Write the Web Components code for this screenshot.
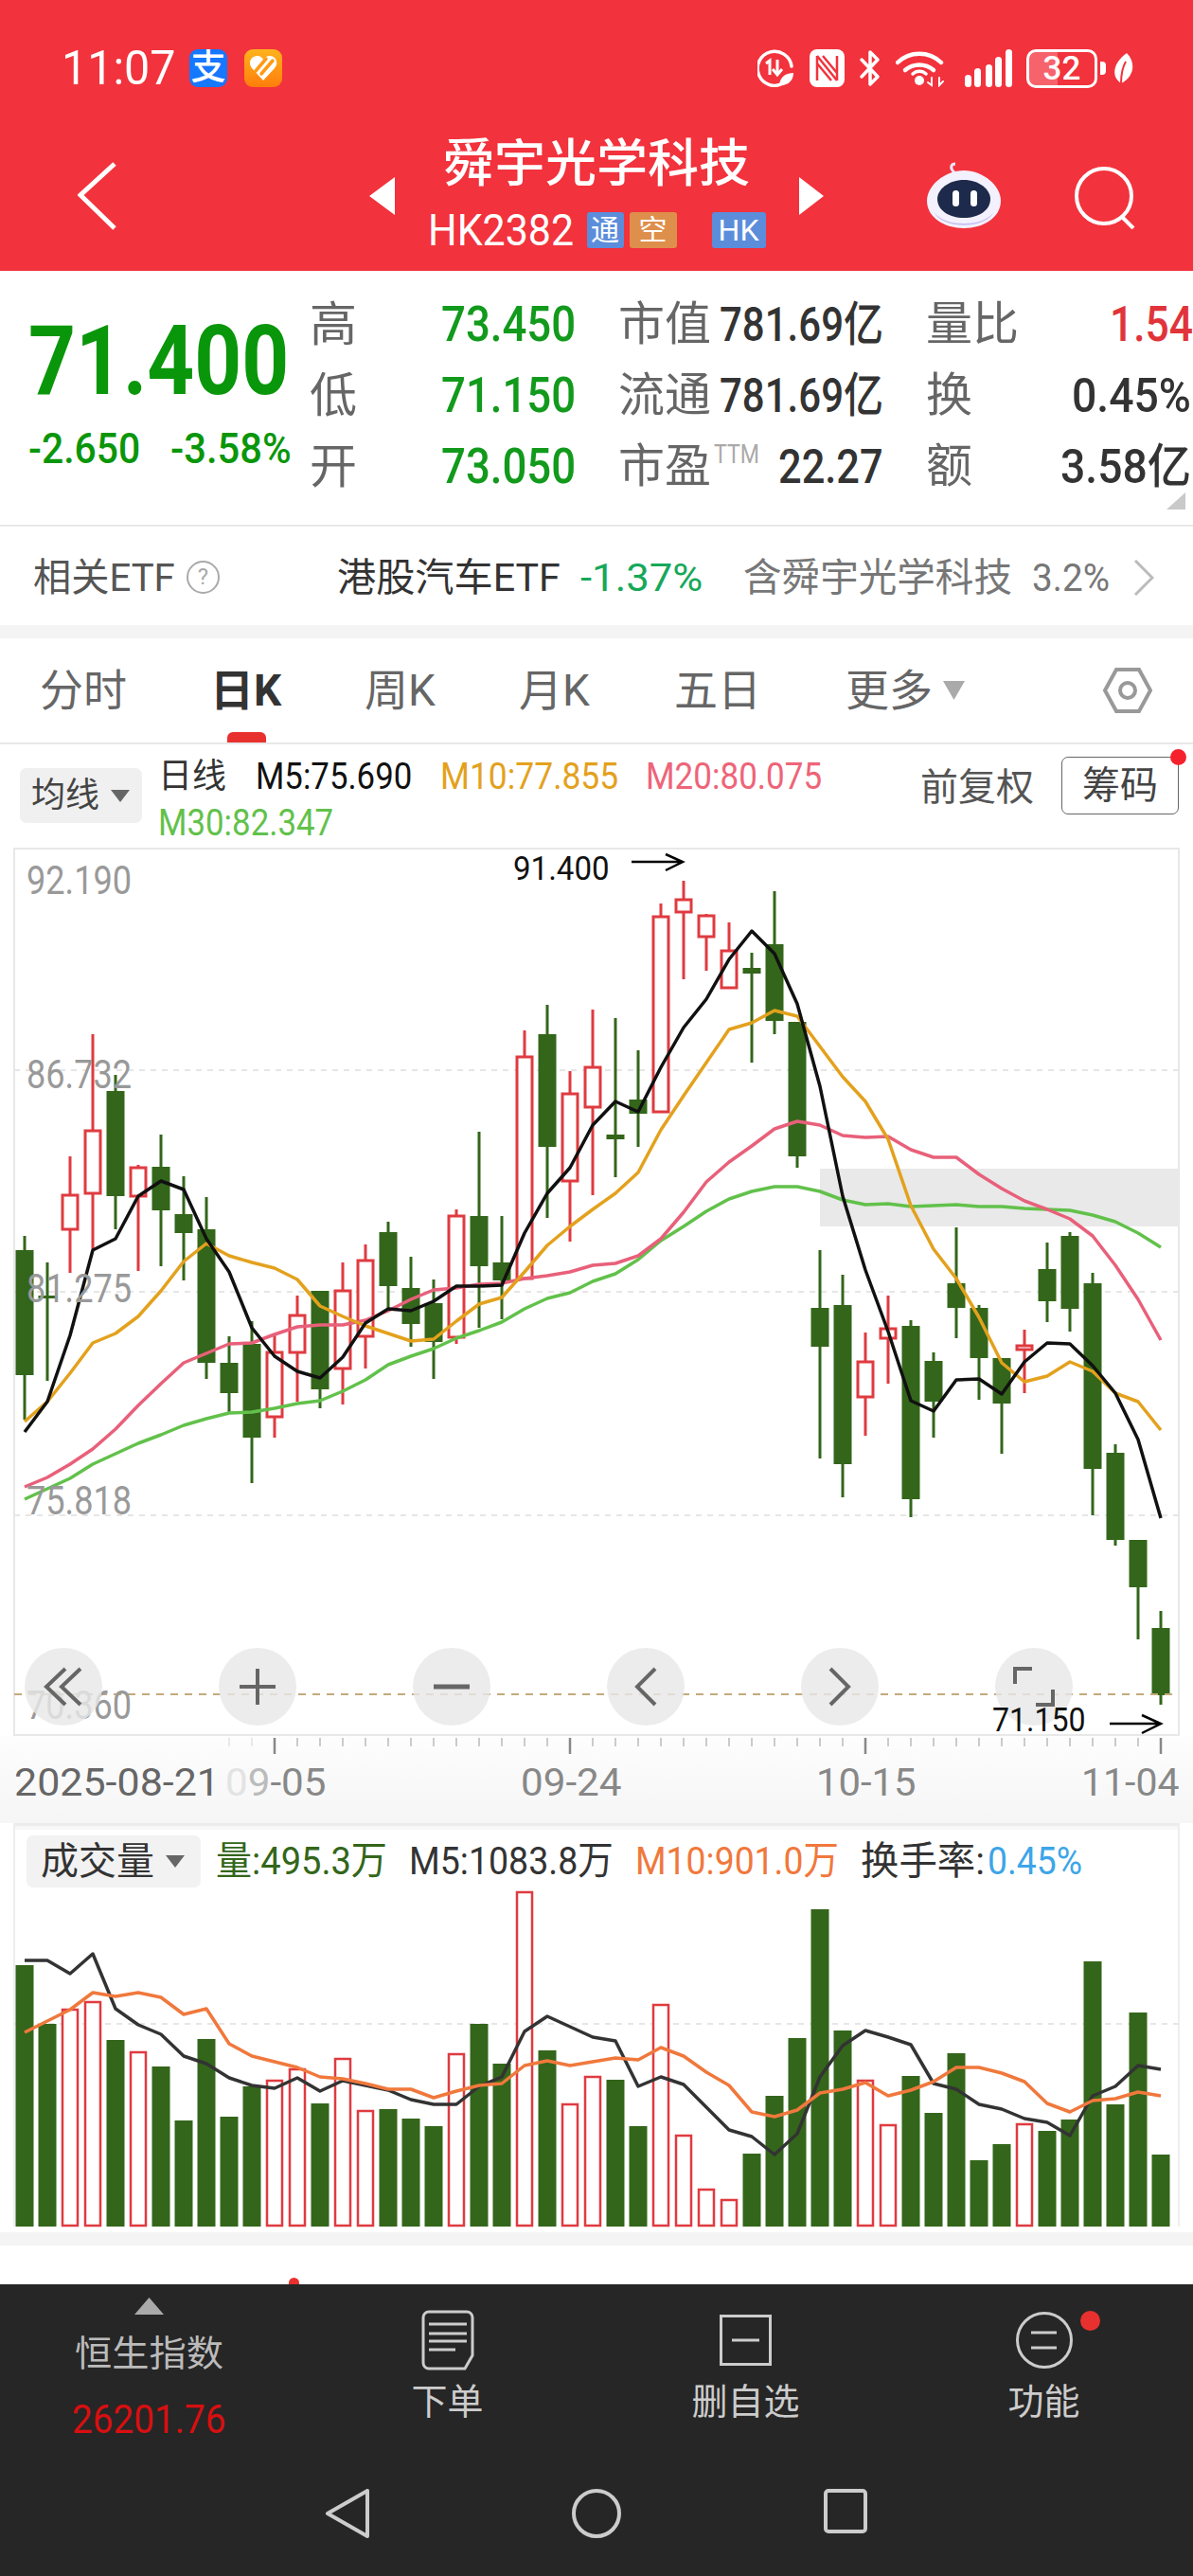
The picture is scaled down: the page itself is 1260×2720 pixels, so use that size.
<!DOCTYPE html>
<html lang="zh">
<head>
<meta charset="utf-8">
<title>舜宇光学科技</title>
<style>
  html, body { margin: 0; padding: 0; background: #fff; }
  body { width: 1260px; height: 2720px; overflow: hidden; font-family: Roboto, "Noto Sans CJK SC", sans-serif; }
</style>
</head>
<body>
<stock-header></stock-header>
<quote-panel></quote-panel>
<etf-row></etf-row>
<period-tabs></period-tabs>
<kline-legend></kline-legend>
<kline-chart></kline-chart>
<date-axis></date-axis>
<volume-panel></volume-panel>
<bottom-bar></bottom-bar>

<script>
const GREEN = '#33661a'
const RED = '#df3b40'
const xAt = (i) => 26 + 24 * i

// squeezes its text to a given width, the app uses a narrow DIN style face
class FitText extends HTMLElement {
  connectedCallback() {
    if (this.shadowRoot) return
    const w = +this.getAttribute('w')
    const root = this.attachShadow({mode: 'open'})
    root.innerHTML = `
      <style>
        :host { display: inline-block; width: ${w}px; white-space: nowrap; vertical-align: top; }
        span { display: inline-block; transform-origin: 0 50%; }
      </style>
      <span><slot></slot></span>
    `
    const inner = root.querySelector('span')
    inner.style.transform = `scaleX(${w / inner.offsetWidth})`
  }
}
customElements.define('fit-text', FitText)

class StockHeader extends HTMLElement {
  connectedCallback() {
    this.attachShadow({mode: 'open'}).innerHTML = `
      <style>
        :host { display: block; height: 286px; background: #f2323c; color: #fff; box-sizing: border-box; padding-top: 51px; }
        .status { display: flex; align-items: center; height: 42px; padding-left: 65px; }
        .time { font-size: 50px; line-height: 42px; width: 135px; }
        .app { width: 40px; height: 40px; border-radius: 9px; display: flex; align-items: center; justify-content: center; }
        .alipay { background: #1677ff; font-size: 37px; line-height: 40px; font-weight: 500; }
        .heart { background: linear-gradient(#ffb31c, #ff7d0c); margin-left: 18px; }
        .sys { display: flex; align-items: center; margin-left: auto; margin-right: 63px; }
        .sys svg { display: block; }
        .battery { width: 75px; height: 41px; box-sizing: border-box; border: 3px solid #fff; border-radius: 10px; margin-left: 15px; position: relative; font-size: 35px; font-weight: 500; line-height: 35px; text-align: center; background: linear-gradient(90deg, #f7636b 44%, transparent 44%); }
        .nav { display: grid; grid-template-columns: 390px 480px 1fr; height: 120px; margin-top: 54px; }
        .back { margin: 24px 0 0 82px; display: block; }
        .center { display: grid; grid-template-columns: 28px 1fr 28px; align-items: start; }
        .center svg { margin-top: 40px; display: block; }
        .mid { text-align: center; }
        .title { font-size: 54px; line-height: 58px; font-weight: 500; height: 58px; margin-top: -2px; }
        .sub { display: flex; justify-content: center; align-items: center; height: 38px; margin-top: 21px; }
        .code { font-size: 46px; line-height: 38px; width: 154px; text-align: left; }
        .tag { height: 38px; border-radius: 3px; font-size: 30px; line-height: 38px; text-align: center; color: #fff; }
        .t1 { width: 39px; background: #5b8ddb; margin-left: 14px; }
        .t2 { width: 50px; background: #de8f4b; margin-left: 6px; }
        .t3 { width: 57px; background: #5b8ddb; margin-left: 37px; font-size: 32px; }
        .tools { display: flex; align-items: flex-start; padding-left: 108px; padding-top: 23px; }
        .tools svg { display: block; }
      </style>
      <div class="status">
        <div class="time"><fit-text w="121">11:07</fit-text></div>
        <div class="app alipay">支</div>
        <div class="app heart">
          <svg width="30" height="28" viewBox="0 0 30 28"><path d="M15 27 L3 14 C-2 7 3 1 9 1 C12 1 14 3 15 5 C16 3 19 1 22 1 C28 1 32 8 27 14 Z" fill="#fff"/><path d="M18 4 L7 17 M25 6 L13 20" stroke="#ff9a14" stroke-width="3.5" fill="none" stroke-linecap="round"/></svg>
        </div>
        <div class="sys">
          <svg width="38" height="40" viewBox="0 0 38 40" fill="none" stroke="#fff"><path d="M27 36 A18 18 0 1 1 36 18" stroke-width="3.5" stroke-linecap="round"/><path d="M9 15 L13 12 V27" stroke-width="3"/><path d="M21 11 V26 M16 21 L21 27 L26 21" stroke-width="3"/><path d="M23 38 C24 28 31 25 38 25 C38 33 32 39 23 38 Z" fill="#fff" stroke="none"/></svg>
          <svg style="margin-left:17px" width="37" height="40" viewBox="0 0 37 40"><rect width="37" height="40" rx="8" fill="#fff"/><path d="M8 7 V33 M29 7 V33 M8 7 L29 33 M14 7 L29 25 M8 15 L23 33" stroke="#f2323c" stroke-width="2.5" fill="none"/></svg>
          <svg style="margin-left:15px" width="24" height="40" viewBox="0 0 24 40" fill="none" stroke="#fff" stroke-width="3.5" stroke-linecap="round" stroke-linejoin="round"><path d="M3 11 L20 29 L12 37 V3 L20 11 L3 29"/></svg>
          <svg style="margin-left:15px" width="52" height="40" viewBox="0 0 52 40" fill="none" stroke="#fff" stroke-linecap="round"><path d="M2 14 A33 33 0 0 1 48 14" stroke-width="4.5"/><path d="M10 22 A23 23 0 0 1 40 22" stroke-width="4.5"/><circle cx="25" cy="33" r="5" fill="#fff" stroke="none"/><path d="M18 26 A10 10 0 0 1 32 26" stroke-width="3.5"/><path d="M38 30 V38 L34 35 M46 30 V38 L50 34" stroke-width="2"/></svg>
          <svg style="margin-left:21px" width="50" height="40" viewBox="0 0 50 40" fill="#fff"><rect x="0" y="27" width="7" height="13" rx="3.5"/><rect x="10" y="20" width="7" height="20" rx="3.5"/><rect x="22" y="16" width="7" height="24" rx="3.5"/><rect x="32" y="8" width="7" height="32" rx="3.5"/><rect x="43" y="0" width="7" height="40" rx="3.5"/></svg>
          <div class="battery">32</div>
          <svg style="margin-left:3px" width="6" height="14" viewBox="0 0 6 14"><path d="M0 0 H2 a4 4 0 0 1 4 4 V10 a4 4 0 0 1 -4 4 H0 Z" fill="#fff"/></svg>
          <svg style="margin-left:7px" width="22" height="32" viewBox="0 0 22 32"><path d="M15 0 C25 10 23 25 9 32 C-3 24 2 9 15 0 Z" fill="#fff"/><path d="M14 9 C10 16 9 24 9 32" stroke="#f2323c" stroke-width="2" fill="none"/></svg>
        </div>
      </div>
      <div class="nav">
        <svg class="back" width="42" height="72" viewBox="0 0 42 72" fill="none" stroke="#fff" stroke-width="5"><path d="M39 2 L3 35 L39 70"/></svg>
        <div class="center">
          <svg width="28" height="40" viewBox="0 0 28 40"><path d="M27 0 V40 L0 20 Z" fill="#fff"/></svg>
          <div class="mid">
            <div class="title">舜宇光学科技</div>
            <div class="sub">
              <fit-text class="code" w="154">HK2382</fit-text>
              <span class="tag t1">通</span><span class="tag t2">空</span><span class="tag t3">HK</span>
            </div>
          </div>
          <svg style="margin-left:2px" width="26" height="40" viewBox="0 0 26 40"><path d="M0 0 V40 L26 20 Z" fill="#fff"/></svg>
        </div>
        <div class="tools">
          <svg width="80" height="72" viewBox="0 0 80 72">
            <path d="M30 12 C25 8 26 3 31 3" stroke="#e8e4f8" stroke-width="3" fill="none"/>
            <path d="M40 10 C60 10 79 26 79 42 C79 60 60 71 40 71 C20 71 1 60 1 42 C1 26 20 10 40 10 Z" fill="#f3f1fd"/>
            <path d="M40 66 C28 66 16 63 9 55 C18 72 62 72 71 55 C64 63 52 66 40 66 Z" fill="#c7bff0"/>
            <path d="M40 20 C56 20 68 30 68 40 C68 52 56 60 40 60 C24 60 12 52 12 40 C12 30 24 20 40 20 Z" fill="#1d2a4b"/>
            <rect x="28" y="31" width="7" height="17" rx="3.5" fill="#fff"/><rect x="47" y="31" width="7" height="17" rx="3.5" fill="#fff"/>
          </svg>
          <svg style="margin:6px 0 0 77px" width="64" height="66" viewBox="0 0 64 66" fill="none" stroke="#fff" stroke-width="4"><circle cx="31" cy="31" r="29"/><path d="M50 53 L62 65"/></svg>
        </div>
      </div>
    `
  }
}
customElements.define('stock-header', StockHeader)

class QuotePanel extends HTMLElement {
  connectedCallback() {
    this.attachShadow({mode: 'open'}).innerHTML = `
      <style>
        :host { display: block; position: relative; height: 270px; overflow: hidden; box-sizing: border-box; border-bottom: 2px solid #e8e8e8; background: #fff; }
        .wrap { display: grid; grid-template-columns: 327px 1fr; }
        .left { padding: 59px 0 0 30px; color: #0a960a; }
        .price { font-size: 102px; line-height: 72px; font-weight: 700; height: 72px; }
        .chg { display: flex; gap: 32px; margin-top: 41px; font-size: 44px; line-height: 32px; font-weight: 500; }
        .grid { display: grid; grid-template-columns: 139px 187px 325px 282px; grid-auto-rows: 75px; padding-top: 19px; align-items: center; }
        .k { color: #666; font-size: 49px; line-height: 60px; }
        .big { font-size: 50px; }
        .g { color: #129a1c; font-size: 51px; line-height: 60px; font-weight: 500; }
        .pair { display: flex; justify-content: space-between; align-items: center; width: 280px; }
        .pair.end { width: 280px; }
        .v { color: #333; font-size: 50px; line-height: 60px; font-weight: 500; }
        .r { color: #e0343a; font-size: 51px; line-height: 60px; font-weight: 500; margin-right: -2px; }
        .ttm { color: #aaa; font-size: 27px; line-height: 24px; margin: -26px 0 0 3px; }
        .lab { display: flex; align-items: center; }
        .corner { position: absolute; right: 8px; bottom: 16px; width: 20px; height: 18px; background: #c9c9c9; clip-path: polygon(100% 0, 100% 100%, 0 100%); }
      </style>
      <div class="wrap">
        <div class="left">
          <div class="price"><fit-text w="275">71.400</fit-text></div>
          <div class="chg"><fit-text w="118">-2.650</fit-text><fit-text w="128">-3.58%</fit-text></div>
        </div>
        <div class="grid">
          <span class="k big">高</span><span class="g"><fit-text w="142">73.450</fit-text></span>
          <div class="pair"><span class="k">市值</span><span class="v"><fit-text w="173">781.69亿</fit-text></span></div>
          <div class="pair end"><span class="k">量比</span><span class="r"><fit-text w="88">1.54</fit-text></span></div>

          <span class="k big">低</span><span class="g"><fit-text w="142">71.150</fit-text></span>
          <div class="pair"><span class="k">流通</span><span class="v"><fit-text w="173">781.69亿</fit-text></span></div>
          <div class="pair end"><span class="k">换</span><span class="v"><fit-text w="126">0.45%</fit-text></span></div>

          <span class="k big">开</span><span class="g"><fit-text w="142">73.050</fit-text></span>
          <div class="pair"><div class="lab"><span class="k">市盈</span><span class="ttm"><fit-text w="48">TTM</fit-text></span></div><span class="v"><fit-text w="111">22.27</fit-text></span></div>
          <div class="pair end"><span class="k">额</span><span class="v"><fit-text w="138">3.58亿</fit-text></span></div>
        </div>
      </div>
      <div class="corner"></div>
    `
  }
}
customElements.define('quote-panel', QuotePanel)

class EtfRow extends HTMLElement {
  connectedCallback() {
    this.attachShadow({mode: 'open'}).innerHTML = `
      <style>
        :host { display: block; height: 118px; box-sizing: border-box; border-bottom: 14px solid #f4f4f4; background: #fff; }
        .row { display: flex; align-items: center; height: 104px; box-sizing: border-box; padding: 3px 0 0 35px; font-size: 41px; line-height: 50px; color: #777; }
        .help { width: 35px; height: 35px; box-sizing: border-box; border: 2px solid #aaa; border-radius: 50%; margin-left: 12px; color: #aaa; font-size: 24px; line-height: 31px; text-align: center; }
        .name { color: #333; margin-left: 124px; }
        .pct { color: #16a85a; margin-left: 21px; }
        .sw { margin-left: 43px; }
        .sv { margin-left: 21px; }
        svg { margin-left: 25px; display: block; }
      </style>
      <div class="row">
        <fit-text w="150" style="color:#555">相关ETF</fit-text>
        <span class="help">?</span>
        <fit-text class="name" w="236">港股汽车ETF</fit-text>
        <fit-text class="pct" w="129">-1.37%</fit-text>
        <fit-text class="sw" w="284">含舜宇光学科技</fit-text>
        <fit-text class="sv" w="82">3.2%</fit-text>
        <svg width="22" height="38" viewBox="0 0 22 38" fill="none" stroke="#bbb" stroke-width="3"><path d="M2 1 L20 19 L2 37"/></svg>
      </div>
    `
  }
}
customElements.define('etf-row', EtfRow)

class PeriodTabs extends HTMLElement {
  connectedCallback() {
    this.attachShadow({mode: 'open'}).innerHTML = `
      <style>
        :host { display: block; height: 112px; box-sizing: border-box; border-bottom: 2px solid #e8e8e8; background: #fff; }
        .tabs { display: grid; grid-template-columns: 180px 163px 163px 164px 181px 1fr; height: 110px; padding-left: 42px; align-items: center; font-size: 46px; line-height: 56px; color: #666; }
        .on { position: relative; color: #333; font-weight: 700; height: 110px; display: flex; align-items: center; }
        .on::after { content: ""; position: absolute; left: 18px; bottom: 0; width: 41px; height: 11px; background: #e8312f; border-radius: 6px 6px 0 0; }
        .more { display: flex; align-items: center; }
        .more svg { margin: 0 0 0 11px; display: block; }
        .last { display: flex; align-items: center; }
        .gear { margin-left: 146px; display: block; }
      </style>
      <div class="tabs">
        <span>分时</span>
        <span class="on">日K</span>
        <span>周K</span>
        <span>月K</span>
        <span>五日</span>
        <div class="last">
          <div class="more">更多<svg width="23" height="20" viewBox="0 0 23 20"><path d="M0 0 H23 L11.5 20 Z" fill="#aaa"/></svg></div>
          <svg class="gear" width="52" height="48" viewBox="0 0 52 48" fill="none" stroke="#999" stroke-width="4"><path d="M14 2 H38 L50 24 L38 46 H14 L2 24 Z"/><circle cx="26" cy="24" r="8"/></svg>
        </div>
      </div>
    `
  }
}
customElements.define('period-tabs', PeriodTabs)

class KlineLegend extends HTMLElement {
  connectedCallback() {
    this.attachShadow({mode: 'open'}).innerHTML = `
      <style>
        :host { display: block; height: 109px; background: #fff; position: relative; }
        .row { display: flex; align-items: flex-start; height: 109px; padding-left: 21px; font-size: 39px; line-height: 49px; }
        .pick { display: flex; align-items: center; width: 129px; height: 58px; margin-top: 25px; box-sizing: border-box; padding-left: 12px; background: #f0f0f0; border-radius: 7px; color: #444; font-size: 36px; line-height: 58px; }
        .pick svg { margin-left: 12px; display: block; }
        .ma { margin: 10px 0 0 17px; width: 720px; }
        .line { display: flex; height: 49px; color: #111; }
        .cjk { color: #333; font-size: 36px; width: 103px; }
        .m10 { color: #e3a11d; margin-left: 30px; }
        .m20 { color: #ee6478; margin-left: 29px; }
        .m30 { color: #62c14b; }
        .fq { margin: 21px 0 0 85px; color: #555; font-size: 40px; line-height: 50px; width: 149px; }
        .chip { position: relative; width: 124px; height: 61px; margin-top: 13px; box-sizing: border-box; border: 1.5px solid #666; border-radius: 7px; color: #444; font-size: 40px; line-height: 59px; text-align: center; }
        .dot { position: absolute; right: -9px; top: -9px; width: 17px; height: 17px; background: #f5222d; border-radius: 50%; }
      </style>
      <div class="row">
        <div class="pick">均线<svg width="20" height="13" viewBox="0 0 20 13"><path d="M0 0 H20 L10 13 Z" fill="#666"/></svg></div>
        <div class="ma">
          <div class="line"><span class="cjk">日线</span><fit-text w="165">M5:75.690</fit-text><fit-text class="m10" w="188">M10:77.855</fit-text><fit-text class="m20" w="186">M20:80.075</fit-text></div>
          <div class="line m30"><fit-text w="185">M30:82.347</fit-text></div>
        </div>
        <div class="fq">前复权</div>
        <div class="chip">筹码<span class="dot"></span></div>
      </div>
    `
  }
}
customElements.define('kline-legend', KlineLegend)

// [wick top, body top, body bottom, wick bottom, up?]
const CANDLES = [
  [1305,1320,1452,1499,0],[1333,1368,1371,1458,0],[1221,1262,1298,1344,1],[1092,1194,1260,1319,1],[1135,1152,1263,1298,0],
  [1230,1233,1263,1342,1],[1198,1232,1278,1337,0],[1242,1282,1302,1352,0],[1264,1298,1439,1456,0],[1411,1439,1471,1491,0],
  [1395,1419,1518,1566,0],[1408,1428,1496,1518,1],[1368,1389,1428,1480,1],[1363,1363,1467,1487,0],[1333,1363,1445,1483,1],
  [1314,1331,1411,1445,1],[1290,1301,1358,1384,0],[1327,1360,1398,1422,0],[1351,1376,1417,1456,0],[1277,1284,1412,1419,1],
  [1195,1284,1337,1402,0],[1284,1333,1352,1393,0],[1088,1116,1350,1350,1],[1061,1092,1211,1286,0],[1131,1155,1247,1311,1],
  [1066,1127,1169,1262,1],[1075,1198,1203,1243,0],[1109,1161,1176,1211,0],[954,968,1174,1174,1],[930,950,963,1034,1],
  [965,967,989,1025,1],[974,1004,1043,1043,1],[1006,1022,1028,1122,0],[941,997,1078,1092,0],[1079,1079,1221,1233,0],
  [1320,1381,1422,1540,0],[1346,1378,1546,1581,0],[1407,1438,1475,1516,1],[1368,1403,1413,1461,1],[1394,1400,1583,1602,0],
  [1428,1437,1480,1518,0],[1296,1355,1381,1413,0],[1378,1381,1434,1478,0],[1434,1434,1482,1535,0],[1404,1421,1425,1471,1],
  [1312,1340,1374,1396,0],[1301,1305,1382,1406,0],[1344,1355,1551,1600,0],[1525,1534,1626,1632,0],[1626,1626,1676,1731,0],
  [1701,1719,1790,1800,0]
]
const MA5 = [1512,1480,1410,1320,1308,1263,1247,1256,1308,1343,1402,1432,1448,1455,1433,1397,1382,1384,1374,1358,1358,1357,1302,1260,1233,1188,1163,1174,1127,1085,1055,1013,983,1007,1060,1147,1263,1341,1406,1479,1490,1457,1456,1472,1438,1418,1419,1442,1471,1520,1603]
const MA10 = [1501,1480,1450,1418,1408,1390,1363,1332,1313,1326,1333,1339,1351,1379,1390,1400,1408,1416,1414,1395,1377,1370,1343,1315,1295,1277,1260,1238,1193,1157,1122,1087,1080,1067,1073,1105,1137,1163,1203,1273,1319,1350,1391,1439,1459,1453,1438,1448,1471,1480,1510]
const MA20 = [1570,1560,1546,1530,1509,1484,1461,1439,1429,1419,1418,1409,1401,1399,1399,1394,1384,1372,1362,1360,1356,1355,1350,1347,1343,1336,1334,1326,1308,1280,1248,1227,1210,1192,1184,1188,1199,1201,1200,1214,1222,1222,1240,1255,1268,1277,1287,1305,1336,1372,1415]
const MA30 = [1583,1572,1561,1546,1535,1524,1515,1505,1498,1492,1491,1487,1482,1479,1469,1457,1441,1432,1424,1413,1405,1396,1382,1371,1365,1353,1345,1330,1310,1295,1279,1266,1258,1253,1253,1258,1267,1272,1271,1274,1273,1272,1274,1274,1276,1277,1278,1283,1290,1302,1317]

const polyline = (ys, color, width) =>
  `<polyline fill="none" stroke="${color}" stroke-width="${width}" stroke-linejoin="round" points="${ys.map((y, i) => `${xAt(i)},${y}`).join(' ')}"/>`

class KlineChart extends HTMLElement {
  connectedCallback() {
    const bars = CANDLES.map(([wt, bt, bb, wb, up], i) => {
      const x = xAt(i), c = up ? RED : GREEN
      let out = ''
      if (bt > wt) out += `<rect x="${x - 1.5}" y="${wt}" width="3" height="${bt - wt}" fill="${c}"/>`
      if (wb > bb) out += `<rect x="${x - 1.5}" y="${bb}" width="3" height="${wb - bb}" fill="${c}"/>`
      if (up) out += `<rect x="${x - 8}" y="${bt}" width="16" height="${bb - bt}" fill="#fff" stroke="${c}" stroke-width="3"/>`
      else out += `<rect x="${x - 9.5}" y="${bt}" width="19" height="${bb - bt}" fill="${c}"/>`
      return out
    }).join('')
    this.attachShadow({mode: 'open'}).innerHTML = `
      <style>
        :host { display: block; position: relative; height: 938px; font-size: 42px; line-height: 40px; background: #fff; }
        svg.plot { display: block; }
        .y { position: absolute; left: 28px; color: #999; }
        .mark { position: absolute; color: #111; font-size: 35px; line-height: 34px; }
        .btns { position: absolute; left: 26px; top: 845px; display: flex; gap: 123px; }
        .btn { width: 82px; height: 82px; border-radius: 50%; background: rgba(232,232,232,.82); display: flex; align-items: center; justify-content: center; }
        .btn svg { display: block; }
      </style>
      <svg class="plot" width="1260" height="938" viewBox="0 895 1260 938">
        <rect x="15" y="896" width="1230" height="936" fill="none" stroke="#e8e8e8" stroke-width="2"/>
        <rect x="866" y="1234" width="379" height="61" fill="#e9e9e9"/>
        <g stroke="#e6e6e6" stroke-width="2" stroke-dasharray="6 6"><path d="M15 1130 H1245 M15 1364 H1245 M15 1600 H1245"/></g>
        ${bars}
        ${polyline(MA30, '#62c14b', 3.5)}
        ${polyline(MA20, '#e8607a', 3.5)}
        ${polyline(MA10, '#e3a11d', 3.5)}
        ${polyline(MA5, '#111', 3.5)}
        <path d="M15 1789 H1245" stroke="#c3aa7c" stroke-width="2" stroke-dasharray="8 7"/>
        <g fill="none" stroke="#000" stroke-width="2.5"><path d="M667 910 H721 M703 902 L721 910 L703 919"/><path d="M1172 1820 H1226 M1206 1811 L1226 1820 L1206 1830"/></g>
      </svg>
      <fit-text class="y" w="111" style="top:15px">92.190</fit-text>
      <fit-text class="y" w="111" style="top:220px">86.732</fit-text>
      <fit-text class="y" w="111" style="top:446px">81.275</fit-text>
      <fit-text class="y" w="111" style="top:670px">75.818</fit-text>
      <fit-text class="y" w="111" style="top:886px">70.360</fit-text>
      <fit-text class="mark" w="102" style="left:542px;top:6px">91.400</fit-text>
      <div class="btns">
        <div class="btn"><svg width="44" height="42" viewBox="0 0 44 42" fill="none" stroke="#666" stroke-width="4"><path d="M24 2 L4 21 L24 40 M40 2 L20 21 L40 40"/></svg></div>
        <div class="btn"><svg width="40" height="40" viewBox="0 0 40 40" fill="none" stroke="#666" stroke-width="4"><path d="M1 20 H39 M20 1 V39"/></svg></div>
        <div class="btn"><svg width="40" height="8" viewBox="0 0 40 8" fill="none" stroke="#666" stroke-width="5"><path d="M1 4 H39"/></svg></div>
        <div class="btn"><svg width="24" height="42" viewBox="0 0 24 42" fill="none" stroke="#666" stroke-width="4"><path d="M22 2 L3 21 L22 40"/></svg></div>
        <div class="btn"><svg width="24" height="42" viewBox="0 0 24 42" fill="none" stroke="#666" stroke-width="4"><path d="M2 2 L21 21 L2 40"/></svg></div>
        <div class="btn"><svg width="44" height="42" viewBox="0 0 44 42" fill="none" stroke="#666" stroke-width="4"><path d="M2 18 V2 H20 M42 24 V40 H24"/></svg></div>
      </div>
      <fit-text class="mark" w="99" style="left:1048px;top:905px">71.150</fit-text>
    `
  }
}
customElements.define('kline-chart', KlineChart)

class DateAxis extends HTMLElement {
  connectedCallback() {
    const majors = [11, 24, 37, 50]
    let ticks = ''
    for (let i = 9; i <= 50; i++) {
      const major = majors.includes(i)
      const color = i < 11 ? '#e2e2e2' : major ? '#888' : '#bbb'
      ticks += `<rect x="${xAt(i) - (major ? 1.25 : .75)}" y="2" width="${major ? 2.5 : 1.5}" height="${major ? 17 : 9}" fill="${color}"/>`
    }
    this.attachShadow({mode: 'open'}).innerHTML = `
      <style>
        :host { display: block; height: 92px; background: linear-gradient(#fdfdfd, #f6f6f6); overflow: hidden; }
        svg { display: block; }
        .labels { display: flex; padding-left: 15px; margin-top: 9px; font-size: 41px; line-height: 40px; color: #888; }
        .first { color: #666; }
        .fade0 { color: #e3e3e3; }
        .fade9 { color: #bbb; }
      </style>
      <svg width="1260" height="20" viewBox="0 0 1260 20">${ticks}</svg>
      <div class="labels">
        <fit-text class="first" w="217">2025-08-21</fit-text>
        <fit-text w="107" style="margin-left:6px"><span class="fade0">0</span><span class="fade9">9</span>-05</fit-text>
        <fit-text w="107" style="margin-left:205px">09-24</fit-text>
        <fit-text w="106" style="margin-left:205px">10-15</fit-text>
        <fit-text w="104" style="margin-left:174px">11-04</fit-text>
      </div>
    `
  }
}
customElements.define('date-axis', DateAxis)

const VOL = [
  [2075,0],[2137,0],[2122,1],[2114,1],[2154,0],[2167,1],[2182,0],[2239,0],[2153,0],[2235,0],[2203,0],[2197,1],[2185,1],
  [2221,0],[2174,1],[2229,1],[2227,0],[2237,0],[2245,0],[2169,1],[2137,0],[2179,0],[1998,1],[2165,0],[2222,1],[2193,1],
  [2196,0],[2245,0],[2117,1],[2255,1],[2312,1],[2323,1],[2274,0],[2213,0],[2152,0],[2016,0],[2144,0],[2197,1],[2244,1],
  [2192,0],[2231,0],[2168,0],[2281,0],[2264,0],[2243,1],[2250,0],[2238,0],[2071,0],[2222,0],[2125,0],[2275,0]
]
const VOL5 = [2070,2070,2084,2063,2121,2138,2148,2171,2179,2194,2202,2205,2194,2208,2197,2202,2207,2217,2222,2222,2203,2193,2145,2129,2140,2151,2155,2203,2193,2201,2225,2249,2256,2275,2253,2193,2160,2144,2151,2159,2200,2206,2222,2227,2237,2241,2255,2213,2203,2181,2185]
const VOL10 = [2146,2134,2122,2104,2108,2104,2109,2127,2121,2158,2171,2177,2183,2193,2195,2200,2206,2206,2215,2208,2202,2200,2181,2176,2181,2177,2173,2175,2162,2171,2188,2202,2230,2235,2228,2210,2206,2199,2213,2207,2198,2183,2183,2189,2198,2221,2230,2218,2216,2209,2213]

class VolumePanel extends HTMLElement {
  connectedCallback() {
    const bars = VOL.map(([top, up], i) => {
      const x = xAt(i)
      return up
        ? `<rect x="${x - 8}" y="${top}" width="16" height="${2350 - top}" fill="#fff" stroke="${RED}" stroke-width="2.5"/>`
        : `<rect x="${x - 9.5}" y="${top}" width="19" height="${2351 - top}" fill="${GREEN}"/>`
    }).join('')
    this.attachShadow({mode: 'open'}).innerHTML = `
      <style>
        :host { display: block; position: relative; height: 432px; background: #fff; }
        svg { position: absolute; left: 0; top: 0; display: block; }
        .legend { position: relative; display: flex; align-items: center; height: 55px; padding: 13px 0 0 28px; font-size: 41px; line-height: 55px; }
        .pick { display: flex; align-items: center; width: 184px; height: 55px; box-sizing: border-box; padding-left: 15px; background: #f2f2f2; border-radius: 7px; color: #333; font-size: 40px; }
        .pick svg { position: static; margin-left: 12px; }
        .vol { color: ${GREEN}; margin-left: 16px; }
        .m5 { color: #333; margin-left: 23px; }
        .m10 { color: #f0783c; margin-left: 23px; }
        .hs { color: #333; margin-left: 23px; }
        .rate { color: #3da5e8; margin-left: 3px; }
      </style>
      <svg width="1260" height="432" viewBox="0 1925 1260 432">
        <rect x="15" y="1925" width="1230" height="7" fill="#f7f7f7"/>
        <rect x="15" y="1925" width="1230" height="3" fill="#ececec"/>
        <path d="M15 1925 V2351 M1245 1925 V2351" stroke="#eee" stroke-width="2"/>
        <path d="M15 2137 H1245" stroke="#e6e6e6" stroke-width="2" stroke-dasharray="6 6"/>
        ${bars}
        ${polyline(VOL5, '#333', 3.5)}
        ${polyline(VOL10, '#f0783c', 3.5)}
      </svg>
      <div class="legend">
        <div class="pick">成交量<svg width="20" height="13" viewBox="0 0 20 13"><path d="M0 0 H20 L10 13 Z" fill="#666"/></svg></div>
        <fit-text class="vol" w="181">量:495.3万</fit-text>
        <fit-text class="m5" w="216">M5:1083.8万</fit-text>
        <fit-text class="m10" w="215">M10:901.0万</fit-text>
        <fit-text class="hs" w="131">换手率:</fit-text>
        <fit-text class="rate" w="100">0.45%</fit-text>
      </div>
    `
  }
}
customElements.define('volume-panel', VolumePanel)

class BottomBar extends HTMLElement {
  connectedCallback() {
    this.attachShadow({mode: 'open'}).innerHTML = `
      <style>
        :host { display: block; position: relative; margin-top: 14px; background: #fff; padding-top: 41px; }
        :host::before { content: ""; position: absolute; left: 0; right: 0; top: -14px; height: 14px; background: #f4f4f4; }
        .peek { position: absolute; left: 305px; top: 34px; width: 11px; height: 7px; background: #e8312f; border-radius: 6px 6px 0 0; }
        .bar { height: 308px; background: #262626; color: #ccc; }
        .items { display: grid; grid-template-columns: repeat(4, 315px); height: 216px; }
        .item { display: flex; flex-direction: column; align-items: center; padding-top: 27px; font-size: 38px; line-height: 46px; box-sizing: border-box; position: relative; }
        .box { height: 64px; display: flex; align-items: center; justify-content: center; margin-bottom: 10px; }
        svg { display: block; }
        .index { padding-top: 14px; color: #bbb; }
        .index svg { margin-bottom: 18px; }
        .idx { width: 157px; }
        .num { color: #d80f10; margin-top: 23px; font-size: 43px; line-height: 46px; }
        .badge { position: absolute; left: 196px; top: 28px; width: 21px; height: 21px; border-radius: 50%; background: #e8312f; }
        .sys { display: flex; justify-content: center; height: 52px; }
        .sys div { width: 263px; display: flex; justify-content: center; }
      </style>
      <span class="peek"></span>
      <div class="bar">
        <div class="items">
          <div class="item index">
            <svg width="31" height="18" viewBox="0 0 31 18"><path d="M15.5 0 L31 18 H0 Z" fill="#aaa"/></svg>
            <fit-text class="idx" w="157">恒生指数</fit-text>
            <div class="num"><fit-text w="163">26201.76</fit-text></div>
          </div>
          <div class="item">
            <div class="box"><svg width="56" height="64" viewBox="0 0 56 64" fill="none" stroke="#ccc" stroke-width="3"><path d="M8 2 H48 A6 6 0 0 1 54 8 V48 L46 62 H8 A6 6 0 0 1 2 56 V8 A6 6 0 0 1 8 2 Z"/><path d="M8 15 H48 M8 25 H48 M8 33 H48 M8 42 H36"/></svg></div>
            <span>下单</span>
          </div>
          <div class="item">
            <div class="box"><svg width="55" height="54" viewBox="0 0 55 54" fill="none" stroke="#ccc" stroke-width="3"><rect x="1.5" y="1.5" width="52" height="51"/><path d="M13 27 H42"/></svg></div>
            <span>删自选</span>
          </div>
          <div class="item">
            <div class="box"><svg width="60" height="60" viewBox="0 0 60 60" fill="none" stroke="#ccc" stroke-width="3"><circle cx="30" cy="30" r="28.5"/><path d="M16 22 H43 M16 38 H43"/></svg></div>
            <span>功能</span>
            <span class="badge"></span>
          </div>
        </div>
        <div class="sys">
          <div><svg width="46" height="52" viewBox="0 0 46 52" fill="none" stroke="#ccc" stroke-width="4" stroke-linejoin="round"><path d="M44 2 V50 L2 26 Z" /></svg></div>
          <div><svg width="52" height="52" viewBox="0 0 52 52" fill="none" stroke="#ccc" stroke-width="4"><circle cx="26" cy="26" r="24"/></svg></div>
          <div><svg width="46" height="47" viewBox="0 0 46 47" fill="none" stroke="#ccc" stroke-width="4"><rect x="2" y="2" width="42" height="43" rx="3"/></svg></div>
        </div>
      </div>
    `
  }
}
customElements.define('bottom-bar', BottomBar)
</script>
</body>
</html>
